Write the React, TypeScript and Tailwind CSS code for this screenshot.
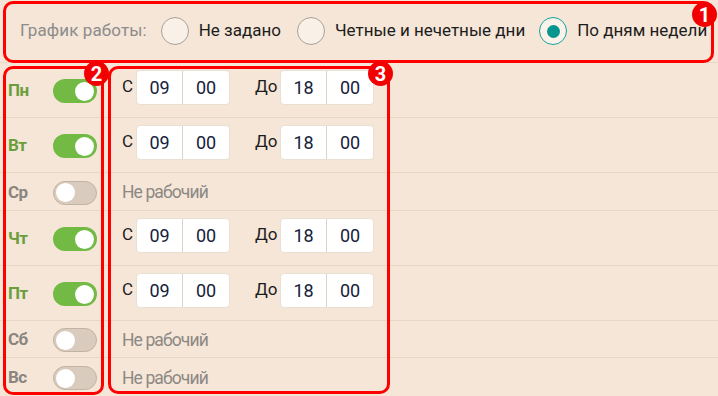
const days = [
  { name: 'Пн', on: true, h: 'h-[55px]' },
  { name: 'Вт', on: true, h: 'h-[55px]' },
  { name: 'Ср', on: false, h: 'h-[38px]' },
  { name: 'Чт', on: true, h: 'h-[55px]' },
  { name: 'Пт', on: true, h: 'h-[55px]' },
  { name: 'Сб', on: false, h: 'h-[37px]' },
  { name: 'Вс', on: false, h: 'h-[39px]' },
]

function Radio({ checked, label, className }: { checked?: boolean; label: string; className: string }) {
  return (
    <div className={`flex items-center gap-[10px] ${className}`}>
      {checked ? (
        <span className="w-[28px] h-[28px] rounded-full border border-[#14a29c] bg-[#fbf3ea] flex items-center justify-center">
          <span className="w-[13px] h-[13px] rounded-full bg-[#04968f]" />
        </span>
      ) : (
        <span className="w-[28px] h-[28px] rounded-full border border-[#aaa095] bg-[#f9f0e7]" />
      )}
      <span className="text-[17px] text-[#1c1c1c]">{label}</span>
    </div>
  )
}

function Toggle({ on }: { on: boolean }) {
  return on ? (
    <div className="w-[44px] h-[24px] rounded-full bg-[#72ba44] flex items-center justify-end pr-[3px]">
      <span className="w-[19px] h-[19px] rounded-full bg-white" />
    </div>
  ) : (
    <div className="w-[44px] h-[24px] rounded-full bg-[#d9cbbd] border border-[#c3b3a3] flex items-center pl-[2px]">
      <span className="w-[19px] h-[19px] rounded-full bg-white" />
    </div>
  )
}

function TimeBox({ a, b }: { a: string; b: string }) {
  return (
    <div className="flex w-[94px] h-[35px] bg-white rounded-[4px] border border-[#eadfd3] text-[18px] text-[#15213a]">
      <span className="w-[46px] flex items-center justify-center border-r border-[#ddd2c6]">{a}</span>
      <span className="flex-1 flex items-center justify-center">{b}</span>
    </div>
  )
}

function Badge({ n, className }: { n: string; className: string }) {
  return (
    <div
      className={`absolute w-[25px] h-[25px] rounded-full bg-[#f20000] text-white text-[20px] font-bold leading-none flex items-center justify-center ${className}`}
    >
      {n}
    </div>
  )
}

export default function App() {
  return (
    <div
      className="relative w-[718px] h-[396px] overflow-hidden bg-[#f5e6d7]"
      style={{ fontFamily: 'Roboto, "Noto Sans", sans-serif' }}
    >
      <div className="h-[62px] flex items-center pl-[20px]">
        <span className="text-[17px] text-[#8c8c8c] tracking-[0.1px]">График работы:</span>
        <Radio label="Не задано" className="ml-[14px]" />
        <Radio label="Четные и нечетные дни" className="ml-[16px]" />
        <Radio checked label="По дням недели" className="ml-[14px]" />
      </div>

      <div className="border-t border-[#e8d7c6]">
        {days.map((d) => (
          <div key={d.name} className={`flex items-center border-b border-[#e8d7c6] ${d.h}`}>
            <div className="w-[122px] flex items-center pl-[8px] pt-[2px]">
              <span
                className={`w-[45px] text-[17px] font-bold tracking-[-0.5px] ${d.on ? 'text-[#6b9d3c]' : 'text-[#8a8580]'}`}
              >
                {d.name}
              </span>
              <Toggle on={d.on} />
            </div>
            {d.on ? (
              <div className="flex items-center -mt-[6px] text-[17px] text-[#1c1c1c]">
                <span className="w-[14px]">С</span>
                <TimeBox a="09" b="00" />
                <span className="ml-[25px] w-[25px]">До</span>
                <TimeBox a="18" b="00" />
              </div>
            ) : (
              <span className="text-[17.5px] tracking-[-0.9px] text-[#8c8884] pt-[2px]">Не рабочий</span>
            )}
          </div>
        ))}
      </div>

      {/* annotation frames */}
      <div className="absolute left-[3px] top-[1px] w-[711px] h-[62px] border-[3px] border-[#ff0000] rounded-[10px]" />
      <div className="absolute left-[3px] top-[66px] w-[101px] h-[329px] border-[3px] border-[#ff0000] rounded-[10px]" />
      <div className="absolute left-[108px] top-[66px] w-[282px] h-[328px] border-[3px] border-[#ff0000] rounded-[10px]" />
      <Badge n="1" className="left-[692px] top-[2px]" />
      <Badge n="2" className="left-[84px] top-[61px]" />
      <Badge n="3" className="left-[368px] top-[61px]" />
    </div>
  )
}
